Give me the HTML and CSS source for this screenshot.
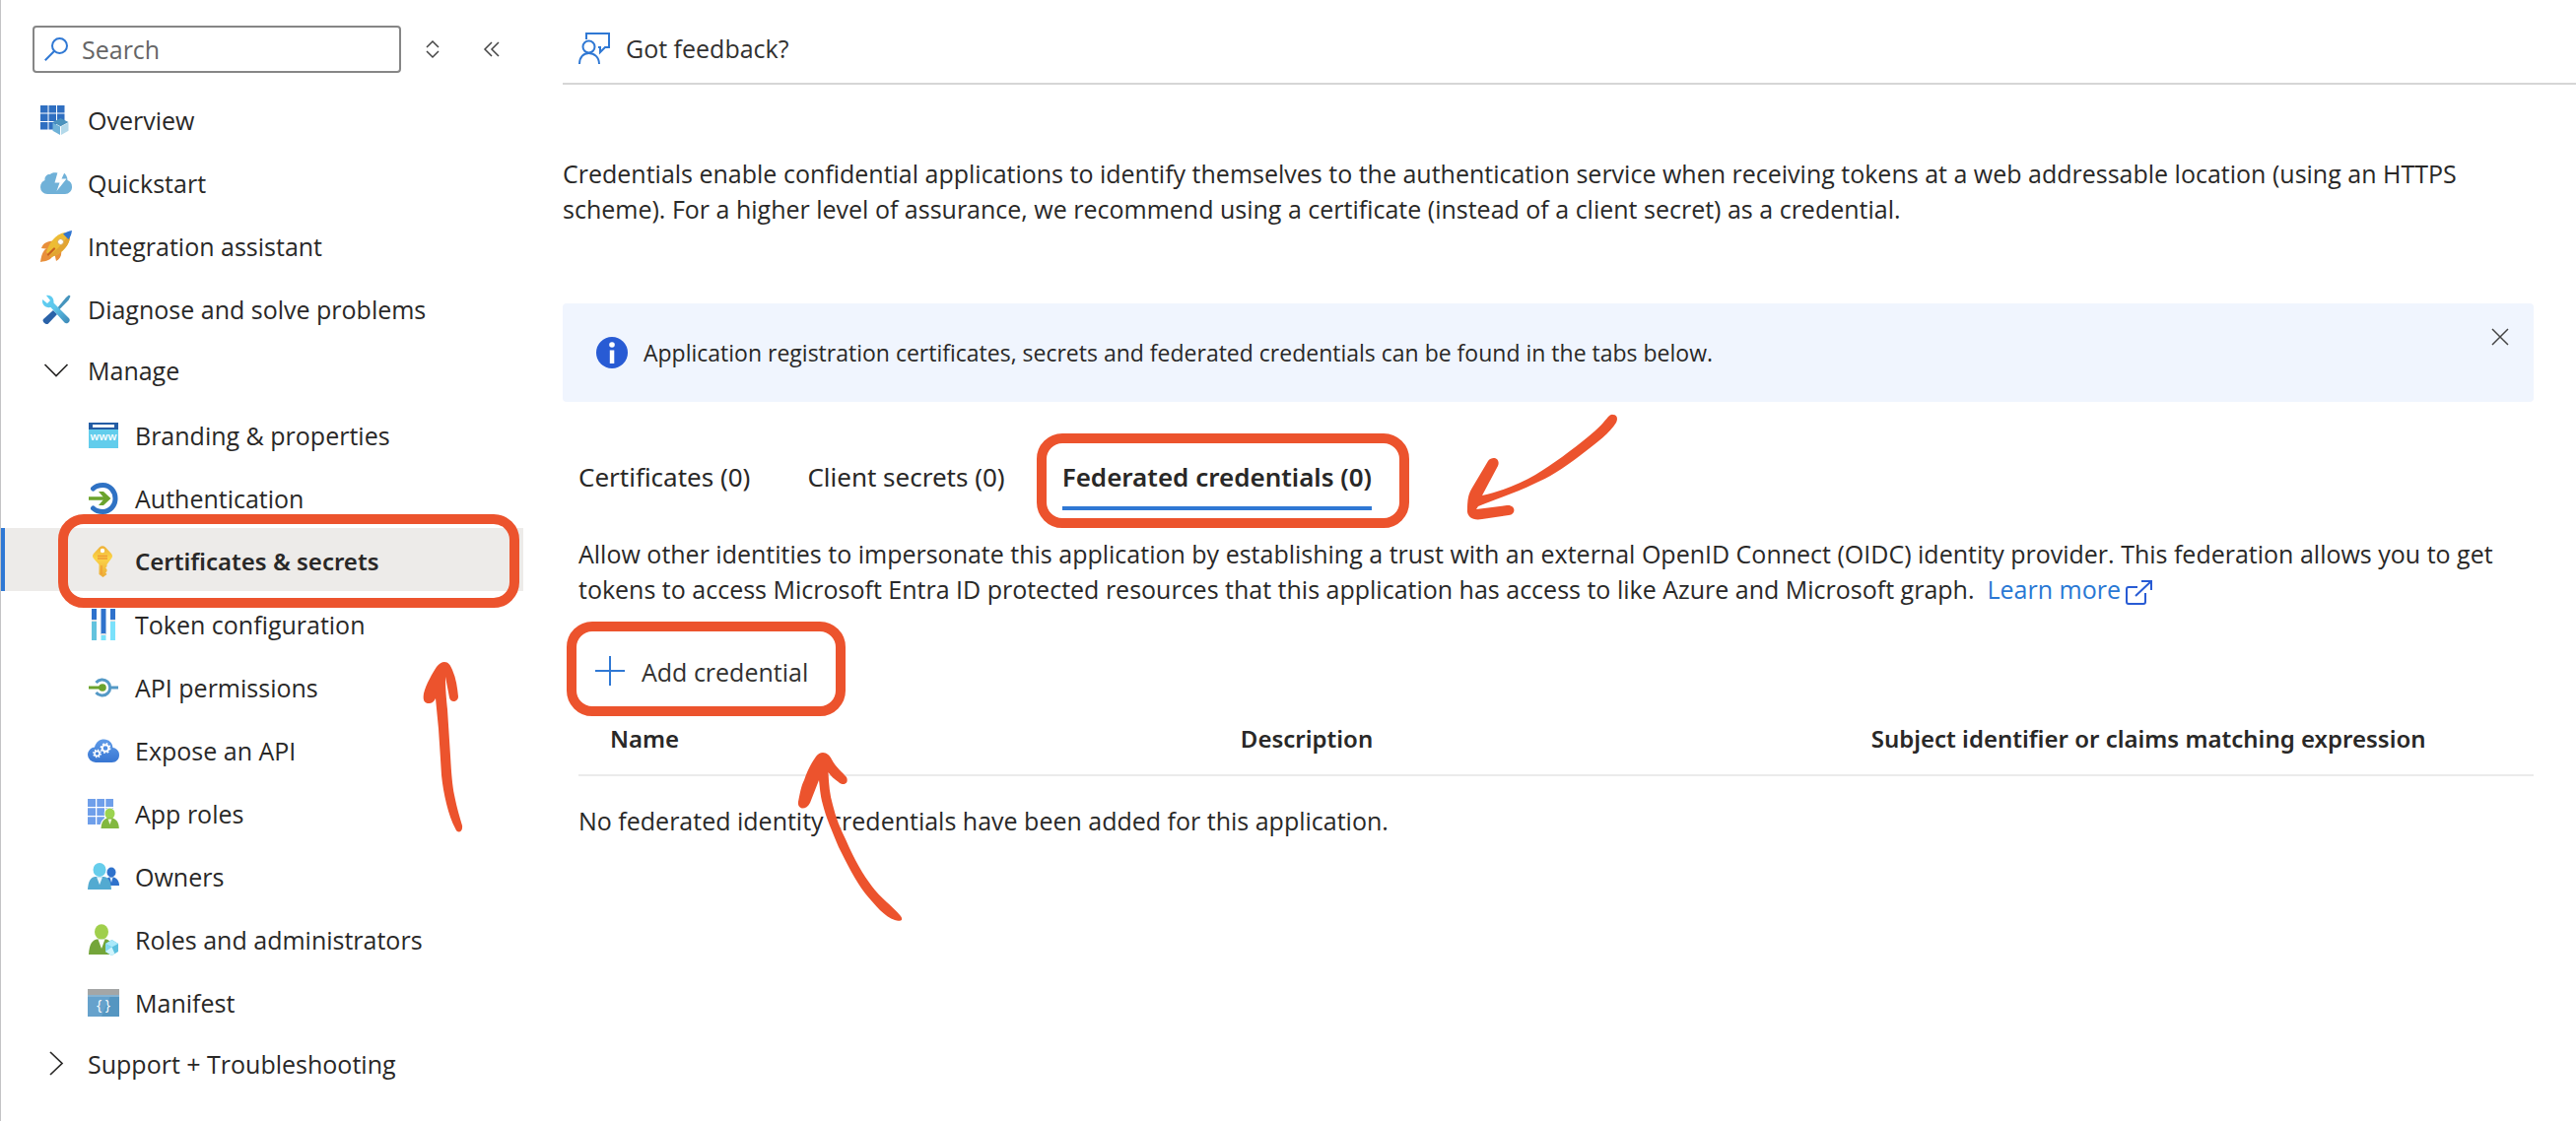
FILE: index.html
```html
<!DOCTYPE html>
<html lang="en">
<head>
<meta charset="utf-8">
<meta name="viewport" content="width=device-width, initial-scale=1">
<title>Certificates &amp; secrets</title>
<link rel="stylesheet" href="styles.css">
</head>
<body>
<div class="app">
  <aside class="sidebar">
    <div class="sidebar-tools">
      <div class="search">
        <svg class="search-icon" viewBox="0 0 24 24" aria-hidden="true"><circle cx="15.500" cy="8.500" r="7.500"/><path d="M10.200 13.800L.8 23.200"/></svg>
        <input id="menu-search" type="text" placeholder="Search" aria-label="Search">
      </div>
      <button class="icon-button" type="button" aria-label="Expand or collapse all">
        <svg class="glyph" viewBox="0 0 16 20" aria-hidden="true"><path d="M2 8l6-6 6 6M2 12l6 6 6-6"/></svg>
      </button>
      <button class="icon-button" type="button" aria-label="Collapse menu">
        <svg class="glyph" viewBox="0 0 16 20" aria-hidden="true"><path d="M8 3L1 10l7 7M15 3l-7 7 7 7"/></svg>
      </button>
    </div>
    <nav aria-label="Resource menu">
      <ul class="menu">
        <li><a class="item" href="#overview">
          <svg class="icon" viewBox="0 0 32 32" aria-hidden="true">
            <path fill="#2f6fc1" d="M0 1h7.500v7.500H0zM8.500 1h7.500v7.500H8.500zM17 1h7.500v7.500H17zM0 9.500h7.500V17H0zM8.500 9.500h7.500V17H8.500zM17 9.500h7.500V17H17zM0 18h7.500v7.500H0zM8.500 18h7.500v7.500H8.500z"/>
            <path fill="#4b93bd" d="M20.500 14l8 4-8 4.200-8-4.200z"/><path fill="#6fb2d8" d="M12.500 18.500l7.500 4v8.500l-7.500-4.200z"/><path fill="#b3d9ea" d="M28.500 18.500L21 22.500V31l7.500-4.200z"/>
          </svg>Overview</a></li>
        <li><a class="item" href="#quickstart">
          <svg class="icon" viewBox="0 0 32 32" aria-hidden="true">
            <path fill="#70b1d8" d="M7 27a7 7 0 0 1-7-7c0-3.500 2-6 4.500-7C4 9 7 6.500 10 7c1-1.500 4-2 7-1.500h7c2 1.500 3.500 4.500 3.500 7.500 3 1 4.500 3.500 4.500 6.500a7 7 0 0 1-7 7.500z"/>
            <path fill="#fff" d="M17.500 5h7l-3 6.500h5L16.500 24l3-8.500h-5z"/>
          </svg>Quickstart</a></li>
        <li><a class="item" href="#integration">
          <svg class="icon" viewBox="0 0 32 32" aria-hidden="true">
            <path fill="#e88f3a" d="M13 10.500c-5 .5-10 1.500-12 7.500l8 1zM21 20c1 5-1 9-5 11l-2-9zM7 18C2 20 1 26 0 32c6-1 11-2 13-7z"/>
            <path fill="#edbc35" d="M6 22C9 12 16 3 25 2l5 5c-1 9-9 17-19 20z"/>
            <path fill="#e2a432" d="M9 25C17 20 24 12 28 5l2 2c-1 9-9 17-19 20z"/>
            <path fill="#2f74d0" d="M23 3.500C26 1.500 29 .5 32 0c-.5 4-1.500 6.500-3.500 9z"/>
            <circle cx="20.500" cy="11.500" r="3" fill="#fff" stroke="#d6a85a"/>
            <path d="M8 24.500l6-6" stroke="#c9601f" stroke-width="2.200" stroke-linecap="round"/>
          </svg>Integration assistant</a></li>
        <li><a class="item" href="#diagnose">
          <svg class="icon" viewBox="0 0 32 32" aria-hidden="true">
            <defs><linearGradient id="wrench" x1="0" y1="0" x2="1" y2="1"><stop offset="0" stop-color="#5ed0f5"/><stop offset=".45" stop-color="#5fc6ea"/><stop offset="1" stop-color="#3b86b5"/></linearGradient></defs>
            <path fill="#4594bd" d="M29 1.500l1.500 1.200-2 4-10 10.300-1.800-1.800L26 4z"/>
            <path fill="#2a62a8" d="M13 17l4 4-9 9.500c-2 2-7-2-5-4.500z"/>
            <path fill="url(#wrench)" d="M6 2c4-1 8 2 7.500 7.500L29 25c2.500 3-2 7-4.500 4.500L10.500 14C5 15 1 11 2.200 6l4.800 4 3-3z"/>
          </svg>Diagnose and solve problems</a></li>
        <li>
          <button class="item item--group" type="button" aria-expanded="true">
            <svg class="icon chevron" viewBox="0 0 32 32" aria-hidden="true"><path d="M4.500 10L16 21.500 27.500 10"/></svg>Manage</button>
          <ul class="menu menu--nested">
            <li><a class="item" href="#branding">
              <svg class="icon" viewBox="0 0 32 32" aria-hidden="true">
                <path fill="#62cdec" d="M1 3h30v26H1z"/><path fill="#245da5" d="M1 3h30v7H1z"/><path fill="#f4f8fb" d="M5 5h22v3H5z"/>
                <text class="icon-www" x="16" y="21" text-anchor="middle">www</text>
              </svg>Branding &amp; properties</a></li>
            <li><a class="item" href="#authentication">
              <svg class="icon" viewBox="0 0 32 32" aria-hidden="true">
                <path fill="none" stroke="#2f72c4" stroke-width="5" stroke-linecap="round" d="M5.500 6c3-3 7-3.500 10-3.500 7 0 12.500 6 12.500 13.500S22.500 29.500 15.500 29.500c-3 0-7-.5-10-3.500"/>
                <path fill="none" stroke="#6ba32d" stroke-width="3.500" d="M1 16h20"/><path fill="#6ba32d" d="M11 9h5l7.500 7-7.500 7h-5l6-7z"/>
              </svg>Authentication</a></li>
            <li class="callout callout--nav"><a class="item item--current" href="#certificates" aria-current="page">
              <svg class="icon" viewBox="1 0 32 32" aria-hidden="true">
                <defs><linearGradient id="key" x1="0" y1="0" x2="0" y2="1"><stop offset="0" stop-color="#eeb038"/><stop offset=".4" stop-color="#fbd447"/><stop offset="1" stop-color="#ecaa38"/></linearGradient></defs>
                <path fill="url(#key)" d="M13 1.500Q16-1 19 1.500l6 6.500q2 2.500 0 5l-4.500 6v2l-1.300 1.500 1.300 1.500v2l-1.300 1.500 1.300 1.500-4 3-4-3V19L7 13q-2-2.500 0-5z"/>
                <circle cx="16" cy="5" r="2.200" fill="#fff"/><path stroke="#f09a35" stroke-width="1.300" d="M11 10.500h10M11 13h10M15 20v9"/>
              </svg>Certificates &amp; secrets</a>
              <svg class="callout-arrow" width="50" height="182" viewBox="425 668 50 182" aria-hidden="true"><path d="M451 672C455 672 457 675 459 680C463 689 464 698 465 707C465 713 457 714 456 708L452 687C452 700 453 710 454 720L457 767C458 785 459 797 461 807C464 822 467 831 469 838C470 845 464 847 462 841C455 828 450 806 448 787C447 770 446 755 445 740L442 709C440 713 438 714 435 714C430 714 429 710 430 704C432 695 439 683 443 677Q447 672 451 672Z"/></svg>
            </li>
            <li><a class="item" href="#token">
              <svg class="icon" viewBox="0 0 32 32" aria-hidden="true">
                <path fill="#2f72cc" d="M4 0h5v12H4zM13.500 0h5v26h-5zM23 0h5v12h-5z"/><path fill="#63c3de" d="M4 13h5v19H4z"/><path fill="#7ae1fb" d="M13.500 27h5v5h-5zM23 13h5v19h-5z"/><path fill="#dfe3e6" d="M4 11h5v2H4zM13.500 25h5v2h-5zM23 11h5v2h-5z"/>
              </svg>Token configuration</a></li>
            <li><a class="item" href="#permissions">
              <svg class="icon" viewBox="0 0 32 32" aria-hidden="true">
                <path fill="none" stroke="#5499c6" stroke-width="3" d="M8.500 11a8 8 0 1 1 0 10M24 16h7"/>
                <path fill="none" stroke="#6ba32d" stroke-width="3" d="M1 16h12"/><circle cx="15" cy="16" r="3.800" fill="#6ba32d"/>
              </svg>API permissions</a></li>
            <li><a class="item" href="#expose">
              <svg class="icon" viewBox="0 0 32 32" aria-hidden="true">
                <defs><linearGradient id="cloud" x1="0" y1="0" x2="0" y2="1"><stop offset="0" stop-color="#5f9be8"/><stop offset="1" stop-color="#3876d2"/></linearGradient></defs>
                <path fill="url(#cloud)" d="M8 28a8 8 0 0 1-8-7.500c0-4.500 3-7.500 7-8C8.500 7 12 4.500 16.500 4.500c5 0 8.500 3.500 9 8.500 4 .5 6.500 3.500 6.500 7.300C32 25 29 28 24.500 28z"/>
                <circle cx="18" cy="13.500" r="3.300" fill="none" stroke="#fff" stroke-width="2"/><circle cx="18" cy="13.500" r="4.700" fill="none" stroke="#fff" stroke-width="1.500" stroke-dasharray="1.850 1.850"/>
                <circle cx="9.500" cy="19" r="2.500" fill="none" stroke="#fff" stroke-width="1.600"/><circle cx="9.500" cy="19" r="3.800" fill="none" stroke="#fff" stroke-width="1.300" stroke-dasharray="1.490 1.490"/>
              </svg>Expose an API</a></li>
            <li><a class="item" href="#roles">
              <svg class="icon" viewBox="0 0 32 32" aria-hidden="true">
                <path fill="#6f9fea" d="M0 1h8v8H0zM9.300 1h7.700v8H9.300zM18.300 1H26v8h-7.700zM0 10.300h8V18H0zM9.300 10.300H17V18H9.300zM18.300 10.300H26V18h-7.700zM0 19.300h8V27H0zM9.300 19.300H17V27H9.300z"/>
                <path fill="#fff" d="M12.500 31c0-6 2-9 5.500-11-3-5-.500-10 4.500-10s7.500 5 4.500 10c3.500 2 5 5 5 11z"/>
                <ellipse cx="22.500" cy="16" rx="5" ry="5.500" fill="#9bd450"/><path fill="#82b83f" d="M13.500 31c.5-6 2-9 6-10.500h6c4 1.500 6 4.500 6.300 10.500z"/><path fill="#eef8e0" d="M20.500 21.500h4l-2 5.500z"/>
              </svg>App roles</a></li>
            <li><a class="item" href="#owners">
              <svg class="icon" viewBox="0 0 32 32" aria-hidden="true">
                <ellipse cx="24" cy="11.500" rx="4.500" ry="5" fill="#2f72cc"/><path fill="#2f72cc" d="M18 25c0-5 1.500-8 4-8.500h4c3.500.5 6 4 6 8.500z"/><path fill="#d9ecfa" d="M22.500 17h3l-1.500 5z"/>
                <ellipse cx="12" cy="9" rx="6.500" ry="7" fill="#66cdeb"/><path fill="#53aad1" d="M0 29c.5-8 2.500-12.500 8-13h8c5.500.5 7.500 5 8 13z"/><path fill="#e8f6fc" d="M9 16.300h6l-3 8z"/>
              </svg>Owners</a></li>
            <li><a class="item" href="#administrators">
              <svg class="icon" viewBox="0 0 32 32" aria-hidden="true">
                <ellipse cx="14" cy="8" rx="7" ry="7.800" fill="#a0cf4c"/><path fill="#74a53a" d="M1 31c.5-8 2-14 8-15.500h10c5 1.500 7 6 8 15.500z"/><path fill="#fff" d="M10.500 15.500h7L14 25z"/>
                <path fill="#5cc0de" d="M24.500 16l6.500 4v8l-6.500 4-6.500-4v-8z"/><path fill="#a9e9fa" d="M24.500 16l6.500 4-6.500 3.500-6.500-3.500z"/><path fill="#84d9f1" d="M18 20l6.500 3.500V32L18 28z"/><path fill="#d0f5fd" d="M18 28l6.500-4.500 3 6.700-3 1.800z"/>
              </svg>Roles and administrators</a></li>
            <li><a class="item" href="#manifest">
              <svg class="icon" viewBox="0 0 32 32" aria-hidden="true">
                <path fill="#5596c1" d="M0 2h32v28H0z"/><path fill="#66a2cc" d="M0 2h26L14 30H0z"/><path fill="#a4a6a6" d="M0 2h32v6H0z"/><path fill="#86b3d2" d="M0 8h32v2H0z"/>
                <text class="icon-braces" x="16" y="23" text-anchor="middle">{ }</text>
              </svg>Manifest</a></li>
          </ul>
        </li>
        <li><button class="item item--group" type="button" aria-expanded="false">
          <svg class="icon chevron" viewBox="0 0 32 32" aria-hidden="true"><path d="M10 4l12 11.500L10 27"/></svg>Support + Troubleshooting</button></li>
      </ul>
    </nav>
  </aside>

  <main class="content">
    <div class="command-bar">
      <button class="command" type="button">
        <svg class="icon line-icon" viewBox="0 0 32 32" aria-hidden="true"><path d="M8 7V1h23v14h-4l-5 5v-5h-2"/><circle cx="10.500" cy="14.500" r="6"/><path d="M1 32c0-7 4-11 9.500-11S21 25 21 32"/></svg>Got feedback?</button>
    </div>
    <p class="intro">Credentials enable confidential applications to identify themselves to the authentication service when receiving tokens at a web addressable location (using an HTTPS<br>scheme). For a higher level of assurance, we recommend using a certificate (instead of a client secret) as a credential.</p>

    <div class="banner" role="status">
      <svg class="icon" viewBox="0 0 32 32" aria-hidden="true"><circle cx="16" cy="16" r="16" fill="#285bd4"/><circle cx="16" cy="8" r="2.800" fill="#fff"/><path fill="#fff" d="M13.800 13.500h4.500V27h-4.500z"/></svg>
      <p class="banner-text">Application registration certificates, secrets and federated credentials can be found in the tabs below.</p>
      <button class="banner-close" type="button" aria-label="Dismiss"><svg class="glyph" viewBox="0 0 16 16" aria-hidden="true"><path d="M0 0l16 16M16 0L0 16"/></svg></button>
    </div>

    <section class="panel">
      <div class="tabs" role="tablist">
        <button class="tab" type="button" role="tab" aria-selected="false">Certificates (0)</button>
        <button class="tab" type="button" role="tab" aria-selected="false">Client secrets (0)</button>
        <div class="callout callout--tab" role="presentation">
          <button class="tab tab--active" type="button" role="tab" aria-selected="true">Federated credentials (0)</button>
          <svg class="callout-arrow" width="165" height="118" viewBox="1480 415 165 118" aria-hidden="true"><path d="M1636 421C1640 421 1641 425 1639 429C1633 439 1620 449 1603 462C1585 476 1570 485 1556 491C1538 500 1516 507 1499 514L1497 517L1528 513C1537 512 1538 522 1530 523L1503 527C1493 529 1487 524 1488 517C1488 505 1490 500 1493 495L1509 468C1514 462 1522 466 1519 473L1503 503C1522 499 1542 491 1557 482C1575 471 1594 457 1611 443C1621 435 1627 428 1631 423Q1634 420 1636 421Z"/></svg>
        </div>
      </div>

      <p class="description">Allow other identities to impersonate this application by establishing a trust with an external OpenID Connect (OIDC) identity provider. This federation allows you to get<br>tokens to access Microsoft Entra ID protected resources that this application has access to like Azure and Microsoft graph. &nbsp;<a class="link" href="#learn-more">Learn more<svg class="external" viewBox="0 0 28 26" aria-hidden="true"><path d="M13 8H4q-2 0-2 2v13q0 2 2 2h15q2 0 2-2v-9M17 2h10v9M27 2L11 17"/></svg></a></p>

      <div class="toolbar">
        <div class="callout callout--add">
          <button class="command" type="button"><svg class="icon line-icon" viewBox="0 0 32 32" aria-hidden="true"><path d="M16 0v30M1 15h30"/></svg>Add credential</button>
          <svg class="callout-arrow" width="120" height="182" viewBox="805 758 120 182" aria-hidden="true"><path d="M835 764C839 764 842 767 844 771C849 780 855 784 859 789C862 796 855 798 851 794C847 791 843 788 840.500 784C841 796 842 807 845 817C848 830 853 842 858.500 853C867 873 876 888 885 900C893 911 906 920 914 930C918 936 911 935 908 934C898 931 888 919 878 907C868 894 859 876 851 860C844 843 838 829 835 817C832 806 832 799 831 792L822 815C818 823 809 822 810 814C812 804 813 798 816 792C820 780 824 774 828 768Q831 764 835 764Z"/></svg>
        </div>
      </div>

      <table class="grid">
        <thead><tr><th scope="col">Name</th><th scope="col">Description</th><th class="grid-subject" scope="col">Subject identifier or claims matching expression</th></tr></thead>
        <tbody><tr><td colspan="3">No federated identity credentials have been added for this application.</td></tr></tbody>
      </table>
    </section>
  </main>
</div>
</body>
</html>
```
FILE: styles.css
```css
:root {
  --font-body: "Open Sans", "Noto Sans", sans-serif;
  --font-heading: "Noto Sans", "Open Sans", sans-serif;
  --accent: #2f78d4;
  --callout: #ec532d;
}

* { box-sizing: border-box; }

body {
  margin: 0;
  background: #fff;
  color: #292827;
  font: 25px/36px var(--font-body);
}

button, input { font: inherit; color: inherit; }
button { border: 0; padding: 0; background: none; text-align: left; cursor: pointer; }
p { margin: 0; }
svg { display: block; flex: none; }

.app { display: flex; min-height: 100vh; }

/* Sidebar */
.sidebar { flex: none; width: 531px; border-left: 1px solid #c3c3c5; }

.sidebar-tools { display: flex; align-items: center; padding: 26px 16px 14px 32px; }
.search {
  display: flex;
  align-items: center;
  gap: 14px;
  width: 374px;
  height: 48px;
  margin-right: 16px;
  padding: 0 10px;
  border: 2px solid #868686;
  border-radius: 4px;
}
.search-icon { width: 24px; height: 24px; fill: none; stroke: var(--accent); stroke-width: 2; }
.search input { flex: 1; min-width: 0; padding: 0; border: 0; outline: 0; background: none; }
.search input::placeholder { color: #666; opacity: 1; }

.icon-button { display: flex; justify-content: center; width: 32px; margin-right: 28px; }
.icon-button + .icon-button { margin-right: 0; }
.icon-button .glyph { height: 20px; }
.glyph { width: 16px; height: 16px; fill: none; stroke: #444; stroke-width: 1.500; overflow: visible; }

.menu { list-style: none; margin: 0; padding: 0; }
.item {
  display: flex;
  align-items: center;
  gap: 16px;
  width: 100%;
  height: 64px;
  padding: 4px 0 0 40px;
  color: inherit;
  text-decoration: none;
}
.item--group { padding-top: 0; }
.menu--nested .item { padding-left: 88px; }
.item--current { background: #edebe9; box-shadow: inset 4px 0 var(--accent); font: 600 24px/36px var(--font-heading); }

.icon { width: 32px; height: 32px; }
.chevron { fill: none; stroke: #292827; stroke-width: 1.700; }
.line-icon { fill: none; stroke: var(--accent); stroke-width: 2; }
.icon-www { font: 600 11px var(--font-body); fill: #fff; }
.icon-braces { font: 14px var(--font-body); fill: #fff; }

/* Content */
.content { flex: 1; min-width: 0; padding-left: 40px; }

.command-bar { display: flex; align-items: center; height: 86px; padding: 0 0 0 16px; border-bottom: 2px solid #d6d6d6; }
.command { display: flex; align-items: center; gap: 16px; color: #323130; }
.command-bar .command { padding-top: 14px; }

.intro { padding: 72px 43px 78px 0; }

.banner {
  display: flex;
  align-items: center;
  gap: 16px;
  height: 100px;
  margin-right: 43px;
  padding: 0 26px 0 34px;
  border-radius: 4px;
  background: #f0f5fe;
}
.banner-text { flex: 1; font-size: 23px; }
.banner-close { align-self: flex-start; padding-top: 26px; }

.panel { padding: 58px 43px 0 16px; }

.tabs { display: flex; gap: 58px; }
.tab { padding-bottom: 12px; border-bottom: 4px solid transparent; font: 26px/36px var(--font-heading); white-space: nowrap; }
.tab--active { border-color: var(--accent); font-weight: 600; }

.description { padding-top: 26px; }
.link { color: #2878d4; text-decoration: none; }
.external { display: inline-block; width: 28px; height: 26px; margin-left: 4px; vertical-align: -6px; fill: none; stroke: #285bd4; stroke-width: 2; }

.toolbar { display: flex; padding: 34px 0 2px; }
.toolbar .command { height: 64px; padding: 0 16px; white-space: nowrap; }

.grid { width: 100%; table-layout: fixed; border-collapse: collapse; }
.grid th { padding: 16px 0 18px 32px; border-bottom: 2px solid #ebebeb; font: 600 24px/36px var(--font-heading); text-align: left; }
.grid-subject { width: 35.500%; }
.grid td { padding: 27px 0; }

/* Hand-drawn callouts laid over the page */
.callout { position: relative; z-index: 1; }
.callout::after {
  content: "";
  position: absolute;
  border: 10px solid var(--callout);
  border-radius: 26px;
  pointer-events: none;
}
.callout-arrow { position: absolute; fill: var(--callout); pointer-events: none; }

.callout--nav::after { inset: -14px 4px -17px 58px; }
.callout--nav .callout-arrow { left: 424px; top: 132px; }
.callout--tab::after { inset: -26px -38px -18px -26px; }
.callout--tab .callout-arrow { left: 403px; top: -51px; }
.callout--add::after { inset: -19px -22px -13px -12px; }
.callout--add .callout-arrow { left: 218px; top: 108px; }
```
